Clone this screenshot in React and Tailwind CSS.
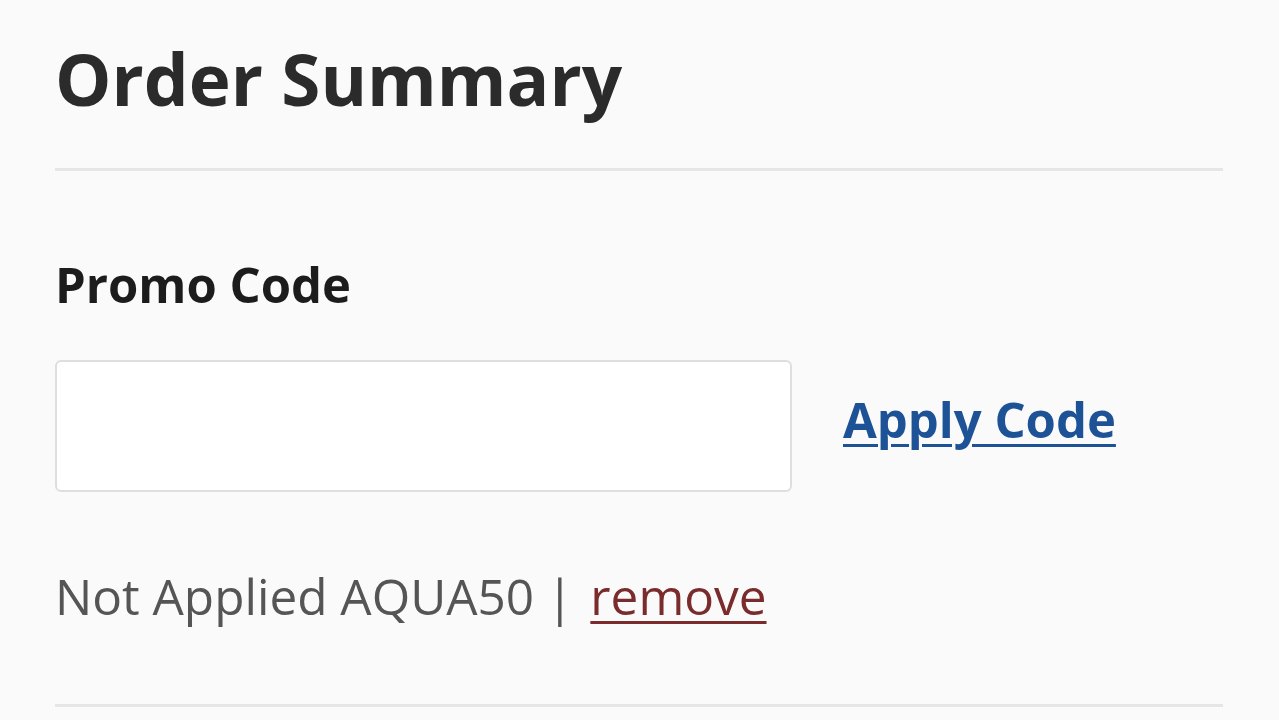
import React from "react";

export default function App() {
  return (
    <div
      className="min-h-screen w-full overflow-hidden bg-[#fafafa] px-[55px] pt-[35px]"
      style={{ fontFamily: '"Open Sans", "Liberation Sans", sans-serif' }}
    >
      <h1 className="text-[71px] leading-[88px] font-bold text-[#2b2b2b]">
        Order Summary
      </h1>
      <div className="mt-[45px] w-[1168px] border-t-[3px] border-[#e6e6e6]" />

      <h2 className="mt-[83px] text-[49px] leading-[60px] font-bold text-[#1c1c1c]">
        Promo Code
      </h2>

      <div className="mt-[46px] flex items-center">
        <input
          type="text"
          className="h-[132px] w-[737px] rounded-[6px] border-2 border-[#dedede] bg-white px-4 text-[40px] outline-none"
        />
        <a
          href="#"
          className="mb-[12px] ml-[51px] text-[49px] font-bold text-[#1d5396] underline decoration-[3px] underline-offset-[6px]"
        >
          Apply Code
        </a>
      </div>

      <p className="mt-[74px] text-[49.5px] leading-[60px] text-[#555555]">
        Not Applied AQUA50
        <span className="ml-[12px] mr-[17px]">|</span>
        <a
          href="#"
          className="text-[#7a2c2c] underline decoration-[3px] underline-offset-[6px]"
        >
          remove
        </a>
      </p>

      <div className="mt-[78px] w-[1168px] border-t-[3px] border-[#e6e6e6]" />
    </div>
  );
}
